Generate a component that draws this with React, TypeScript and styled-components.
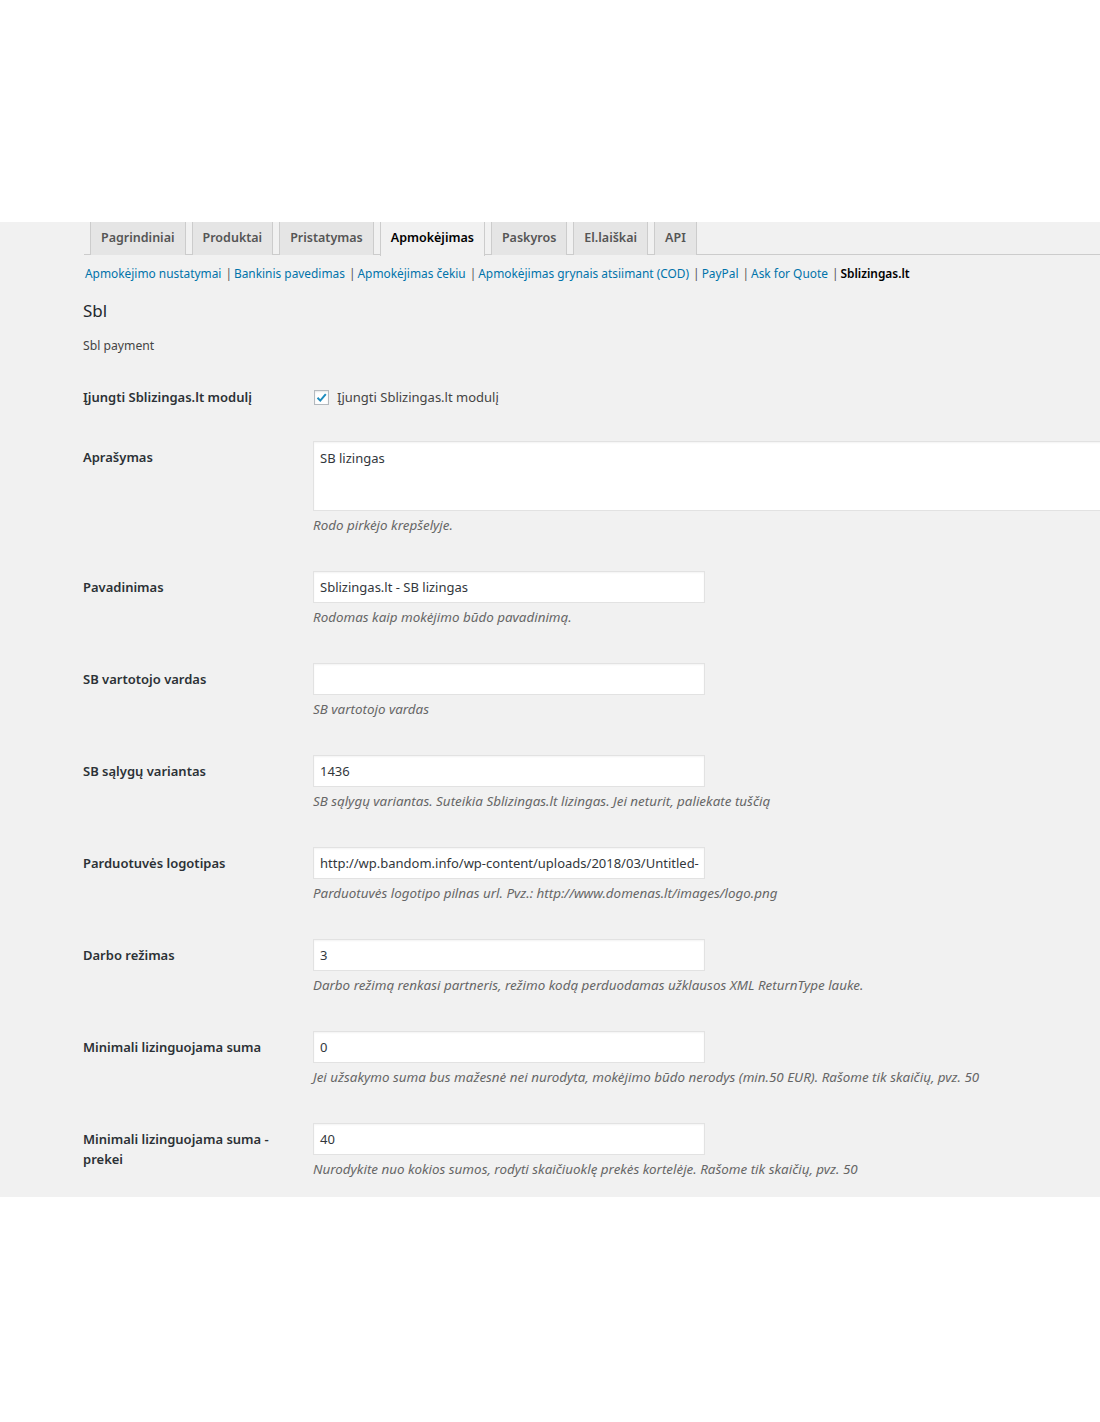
import React from "react";
import styled, { createGlobalStyle, css } from "styled-components";

const GlobalStyle = createGlobalStyle`
  html, body {
    margin: 0;
    padding: 0;
    background: #ffffff;
    font-family: "Noto Sans", "Open Sans", "Liberation Sans", sans-serif;
    font-size: 13px;
    color: #444;
  }
  * { box-sizing: border-box; }
`;

const Page = styled.div`
  width: 1100px;
  overflow: hidden;
`;

const TopSpace = styled.div`
  height: 222px;
  background: #ffffff;
`;

const Panel = styled.section`
  background: #f1f1f1;
  padding: 0 0 0 84px;
  overflow: hidden;
`;

const TabBar = styled.nav`
  display: flex;
  gap: 6px;
  padding-left: 6px;
  border-bottom: 1px solid #ccc;
  height: 33px;
`;

const Tab = styled.a<{ $active?: boolean }>`
  display: block;
  height: 33px;
  line-height: 32px;
  padding: 0 10px;
  background: #e5e5e5;
  border: 1px solid #ccc;
  border-top: none;
  border-bottom: none;
  font-size: 12.5px;
  font-weight: 600;
  color: #555;
  text-decoration: none;
  ${(p) =>
    p.$active &&
    css`
      background: #f1f1f1;
      color: #000;
      height: 34px;
    `}
`;

const SubNav = styled.div`
  margin-top: 8px;
  margin-left: 1px;
  line-height: 20px;
  font-size: 11.9px;
  color: #555;
  white-space: nowrap;
`;

const SubLink = styled.a<{ $current?: boolean }>`
  color: #0073aa;
  text-decoration: none;
  ${(p) =>
    p.$current &&
    css`
      color: #000;
      font-weight: 600;
    `}
`;

const Sep = styled.span`
  color: #555;
  margin: 0 2px 0 4px;
`;

const Heading = styled.h2`
  margin: 16px 0 0 -1px;
  font-size: 17px;
  line-height: 24px;
  font-weight: 400;
  color: #23282d;
`;

const Intro = styled.p`
  margin: 13px 0 0 -1px;
  line-height: 20px;
  font-size: 12.2px;
  color: #444;
`;

const Form = styled.div`
  margin-top: 10px;
`;

const Row = styled.div<{ $bottom?: number }>`
  display: grid;
  grid-template-columns: 229px 1fr;
  padding-bottom: ${(p) => p.$bottom ?? 20}px;
`;

const Label = styled.div`
  padding-top: 21px;
  line-height: 20px;
  font-size: 13px;
  font-weight: 600;
  color: #2c3136;
  padding-right: 20px;
  margin-left: -1px;
`;

const Field = styled.div<{ $top?: number }>`
  padding-top: ${(p) => p.$top ?? 15}px;
  min-width: 0;
`;

const TextInput = styled.div`
  width: 392px;
  height: 32px;
  line-height: 30px;
  padding: 0 6px;
  background: #fff;
  border: 1px solid #e2e2e2;
  box-shadow: inset 0 1px 2px rgba(0, 0, 0, 0.05);
  font-size: 13px;
  color: #32373c;
  white-space: nowrap;
  overflow: hidden;
`;

const TextArea = styled.div`
  width: 840px;
  height: 70px;
  padding: 6px 6px;
  line-height: 20px;
  background: #fff;
  border: 1px solid #e2e2e2;
  box-shadow: inset 0 1px 2px rgba(0, 0, 0, 0.05);
  font-size: 13px;
  color: #32373c;
`;

const Description = styled.p`
  margin: 3px 0 0;
  line-height: 22px;
  font-size: 13.4px;
  font-style: italic;
  color: #666;
  white-space: nowrap;
`;

const CheckLabel = styled.label`
  display: flex;
  align-items: center;
  gap: 8px;
  line-height: 22px;
  font-size: 13px;
  color: #444;
  margin-top: 20px;
  margin-left: 1px;
`;

const CheckBox = styled.span`
  display: inline-flex;
  align-items: center;
  justify-content: center;
  width: 15px;
  height: 15px;
  background: #fff;
  border: 1px solid #b4b9be;
  box-shadow: inset 0 1px 2px rgba(0, 0, 0, 0.1);
`;

const tabs = [
  "Pagrindiniai",
  "Produktai",
  "Pristatymas",
  "Apmokėjimas",
  "Paskyros",
  "El.laiškai",
  "API",
];

const subLinks = [
  "Apmokėjimo nustatymai",
  "Bankinis pavedimas",
  "Apmokėjimas čekiu",
  "Apmokėjimas grynais atsiimant (COD)",
  "PayPal",
  "Ask for Quote",
];

type Setting = { label: React.ReactNode; value: string; desc: string };

const settings: Setting[] = [
  { label: "Pavadinimas", value: "Sblizingas.lt - SB lizingas", desc: "Rodomas kaip mokėjimo būdo pavadinimą." },
  { label: "SB vartotojo vardas", value: "", desc: "SB vartotojo vardas" },
  {
    label: "SB sąlygų variantas",
    value: "1436",
    desc: "SB sąlygų variantas. Suteikia Sblizingas.lt lizingas. Jei neturit, paliekate tuščią",
  },
  {
    label: "Parduotuvės logotipas",
    value: "http://wp.bandom.info/wp-content/uploads/2018/03/Untitled-",
    desc: "Parduotuvės logotipo pilnas url. Pvz.: http://www.domenas.lt/images/logo.png",
  },
  {
    label: "Darbo režimas",
    value: "3",
    desc: "Darbo režimą renkasi partneris, režimo kodą perduodamas užklausos XML ReturnType lauke.",
  },
  {
    label: "Minimali lizinguojama suma",
    value: "0",
    desc: "Jei užsakymo suma bus mažesnė nei nurodyta, mokėjimo būdo nerodys (min.50 EUR). Rašome tik skaičių, pvz. 50",
  },
  {
    label: "Minimali lizinguojama suma - prekei",
    value: "40",
    desc: "Nurodykite nuo kokios sumos, rodyti skaičiuoklę prekės kortelėje. Rašome tik skaičių, pvz. 50",
  },
];

export default function App() {
  return (
    <Page>
      <GlobalStyle />
      <TopSpace />
      <Panel>
        <TabBar>
          {tabs.map((t) => (
            <Tab key={t} $active={t === "Apmokėjimas"}>
              {t}
            </Tab>
          ))}
        </TabBar>
        <SubNav>
          {subLinks.map((s) => (
            <React.Fragment key={s}>
              <SubLink>{s}</SubLink>
              <Sep>|</Sep>
            </React.Fragment>
          ))}
          <SubLink $current>Sblizingas.lt</SubLink>
        </SubNav>
        <Heading>Sbl</Heading>
        <Intro>Sbl payment</Intro>
        <Form>
          <Row $bottom={18}>
            <Label>Įjungti Sblizingas.lt modulį</Label>
            <Field $top={0}>
              <CheckLabel>
                <CheckBox>
                  <svg width="13" height="13" viewBox="0 0 13 13">
                    <path d="M2.5 6.8 L5.3 9.6 L10.8 3.2" fill="none" stroke="#1e8cbe" strokeWidth="2" />
                  </svg>
                </CheckBox>
                Įjungti Sblizingas.lt modulį
              </CheckLabel>
            </Field>
          </Row>
          <Row>
            <Label>Aprašymas</Label>
            <Field>
              <TextArea>SB lizingas</TextArea>
              <Description>Rodo pirkėjo krepšelyje.</Description>
            </Field>
          </Row>
          {settings.map((s, i) => (
            <Row key={i} $bottom={i === settings.length - 1 ? 17 : 20}>
              <Label>{s.label}</Label>
              <Field>
                <TextInput>{s.value}</TextInput>
                <Description>{s.desc}</Description>
              </Field>
            </Row>
          ))}
        </Form>
      </Panel>
    </Page>
  );
}
